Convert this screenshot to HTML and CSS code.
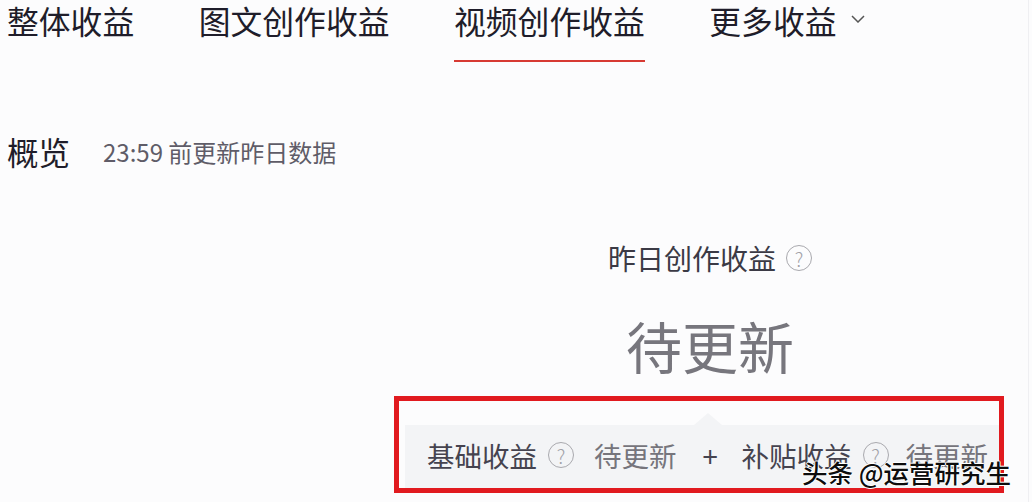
FILE: index.html
```html
<!DOCTYPE html>
<html lang="zh-CN">
<head>
    <meta charset="UTF-8">
    <title>视频创作收益</title>
    <link rel="stylesheet" href="styles.css">
</head>
<body>
    <div class="page">
        <nav class="tabs">
            <span class="tab">整体收益</span>
            <span class="tab">图文创作收益</span>
            <span class="tab active">视频创作收益</span>
            <span class="tab more">更多收益
                <svg class="chevron" width="14" height="8" viewBox="0 0 14 8"><polyline points="1,1 7,7 13,1" fill="none" stroke="#555" stroke-width="1.5"/></svg>
            </span>
        </nav>

        <section class="overview">
            <h2>概览</h2>
            <span class="updated">23:59 前更新昨日数据</span>
        </section>

        <section class="summary">
            <div class="summary-title">
                <span>昨日创作收益</span>
                <span class="help">?</span>
            </div>
            <div class="summary-value">待更新</div>

            <div class="breakdown">
                <span class="label">基础收益</span>
                <span class="help">?</span>
                <span class="value">待更新</span>
                <span class="plus">+</span>
                <span class="label">补贴收益</span>
                <span class="help">?</span>
                <span class="value">待更新</span>
            </div>
        </section>

        <!-- annotation overlay -->
        <div class="highlight"></div>
        <div class="watermark">头条 @运营研究生</div>
    </div>
</body>
</html>
```

FILE: styles.css
```css
body {
    margin: 0;
    background-color: #fcfcfd;
    font-family: "Noto Sans CJK SC", "Noto Sans", sans-serif;
    color: #222;
}

.page {
    position: relative;
    width: 1028px;
    height: 502px;
    overflow: hidden;
    border-right: 1px solid #efeff2;
}

.tabs {
    display: flex;
    align-items: flex-start;
    gap: 64.5px;
    margin-top: -3px;
    padding-left: 7px;
}

.tab {
    font-size: 31.8px;
    line-height: 46px;
    padding-bottom: 17px;
    border-bottom: 2px solid transparent;
    color: #1f1d2a;
    white-space: nowrap;
}

.tab.active {
    border-bottom-color: #d73a33;
}

.tab.more {
    display: flex;
    align-items: center;
}

.chevron {
    margin-left: 14px;
    margin-top: -2px;
}

.overview {
    display: flex;
    align-items: center;
    margin-top: 69px;
    padding-left: 7px;
    height: 40px;
}

.overview h2 {
    margin: 0;
    font-size: 31.5px;
    font-weight: normal;
    line-height: 44px;
    color: #1f1d2a;
}

.updated {
    margin-left: 33px;
    font-size: 24px;
    color: #5f5c68;
}

.summary {
    margin-left: 396px;
    width: 628px;
    margin-top: 69px;
}

.summary-title {
    display: flex;
    justify-content: center;
    align-items: center;
    gap: 10px;
    font-size: 28px;
    line-height: 36px;
    color: #3b3a45;
}

.help {
    display: inline-flex;
    align-items: center;
    justify-content: center;
    width: 26px;
    height: 26px;
    box-sizing: border-box;
    border: 1.5px solid #a9a9ae;
    border-radius: 50%;
    font-size: 19px;
    font-weight: 300;
    line-height: 1;
    color: #a0a0a6;
}

.summary-value {
    margin-top: 34px;
    text-align: center;
    font-size: 56px;
    line-height: 70px;
    color: #77767d;
}

.breakdown {
    position: relative;
    display: flex;
    align-items: center;
    margin-top: 45px;
    margin-left: 9px;
    width: 595px;
    height: 66px;
    box-sizing: border-box;
    padding: 0 0 6px 22px;
    background-color: #f3f4f6;
    font-size: 27.5px;
    white-space: nowrap;
}

.breakdown::before {
    content: "";
    position: absolute;
    top: -12px;
    left: 289px;
    border-left: 14px solid transparent;
    border-right: 14px solid transparent;
    border-bottom: 12px solid #f3f4f6;
}

.breakdown .label {
    color: #45434f;
}

.breakdown .help {
    margin-left: 11px;
}

.breakdown .value {
    margin-left: 20px;
    color: #76757c;
}

.breakdown .plus {
    width: 12px;
    margin: 0 27px 0 26px;
    text-align: center;
    color: #45434f;
}

.breakdown .help + .value:last-child {
    margin-left: 17px;
}

.highlight {
    position: absolute;
    left: 394px;
    top: 396px;
    width: 610px;
    height: 97px;
    box-sizing: border-box;
    border: 5px solid #e11a1f;
}

.watermark {
    position: absolute;
    left: 802px;
    top: 454px;
    font-size: 25.5px;
    font-weight: 500;
    line-height: 36px;
    color: #0d0d0d;
    white-space: nowrap;
    text-shadow: -1px 0 #fff, 1px 0 #fff, 0 -1px #fff, 0 1px #fff;
}
```
